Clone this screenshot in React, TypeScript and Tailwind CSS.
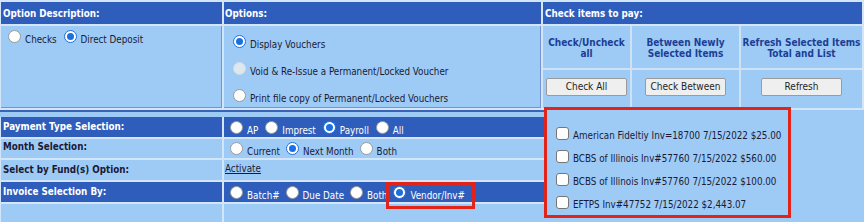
import React from "react";

// colours taken from the screenshot
const DARK = "bg-[#2f5dbb]";
const LIGHT = "bg-[#9ecbf5]";

function Radio({ checked = false, disabled = false }: { checked?: boolean; disabled?: boolean }) {
  if (disabled) {
    return <span className="w-[13px] h-[13px] mb-[3px] rounded-full bg-[#dfe7ee] border border-[#d2dbe3] shrink-0" />;
  }
  return (
    <span
      className={`w-[13px] h-[13px] mb-[3px] rounded-full bg-white border flex items-center justify-center shrink-0 ${
        checked ? "border-[#1d6fe0]" : "border-[#9a9a9a]"
      }`}
    >
      {checked && <span className="w-[7px] h-[7px] rounded-full bg-[#1d6fe0]" />}
    </span>
  );
}

function Option({ label, checked, disabled }: { label: string; checked?: boolean; disabled?: boolean }) {
  return (
    <label className="flex items-end gap-[4px] whitespace-nowrap">
      <Radio checked={checked} disabled={disabled} />
      <span className="leading-[12px]">{label}</span>
    </label>
  );
}

function Check({ label }: { label: string }) {
  return (
    <label className="flex items-end gap-[4px] whitespace-nowrap">
      <span className="w-[13px] h-[13px] mb-[2px] rounded-[3px] bg-white border border-[#767676] shrink-0" />
      <span className="leading-[12px]">{label}</span>
    </label>
  );
}

function Button({ children }: { children: React.ReactNode }) {
  return (
    <button className="w-[81px] h-[18px] bg-[#efefef] border border-[#9b9b9b] rounded-[2px] text-[#1f1f1f] text-[10px] leading-[16px]">
      {children}
    </button>
  );
}

const ITEMS = [
  "American Fideltiy Inv=18700 7/15/2022 $25.00",
  "BCBS of Illinois Inv#57760 7/15/2022 $560.00",
  "BCBS of Illinois Inv#57760 7/15/2022 $100.00",
  "EFTPS Inv#47752 7/15/2022 $2,443.07",
];

export default function App() {
  return (
    <div className="w-[864px] h-[222px] overflow-hidden bg-[#9ecbf5] text-[9.75px] text-[#1a1a38] font-['DejaVu_Sans_Condensed','Liberation_Sans',sans-serif]">
      {/* Top table */}
      <div className="h-[110px] grid grid-cols-[221px_317px_319px] grid-rows-[22px_82px] gap-[2px] pt-[2px] pl-[1px] pb-[2px] bg-[#d3e5f8]">
        <div className={`${DARK} text-white font-bold flex items-center pl-[2px] pt-[2px]`}>Option Description:</div>
        <div className={`${DARK} text-white font-bold flex items-center pl-[1px] pt-[2px]`}>Options:</div>
        <div className={`${DARK} text-white font-bold flex items-center pl-[2px] pt-[2px]`}>Check items to pay:</div>

        <div className={`${LIGHT} border-r border-b border-[#6f98d3] flex items-start gap-[7px] pl-[7px] pt-[4px]`}>
          <Option label="Checks" />
          <Option label="Direct Deposit" checked />
        </div>
        <div className={`${LIGHT} border-r border-b border-[#6f98d3] flex flex-col items-start gap-[11px] pl-[9px] pt-[9px]`}>
          <Option label="Display Vouchers" checked />
          <Option label="Void & Re-Issue a Permanent/Locked Voucher" disabled />
          <Option label="Print file copy of Permanent/Locked Vouchers" />
        </div>
        <div className="grid grid-cols-[87px_107px_1fr] grid-rows-[42px_1fr] gap-[2px] bg-[#cfe1f5]">
          <div className={`${LIGHT} flex items-center justify-center text-center font-bold text-[10px] text-[#1d3e96] leading-[11px] pt-[2px]`}>
            Check/Uncheck
            <br />
            all
          </div>
          <div className={`${LIGHT} flex items-center justify-center text-center font-bold text-[10px] text-[#1d3e96] leading-[11px] pt-[2px]`}>
            Between Newly
            <br />
            Selected Items
          </div>
          <div className={`${LIGHT} flex items-center justify-center text-center font-bold text-[10px] text-[#1d3e96] leading-[11px] pt-[2px]`}>
            Refresh Selected Items
            <br />
            Total and List
          </div>
          <div className={`${LIGHT} flex items-center justify-center pb-[4px]`}>
            <Button>Check All</Button>
          </div>
          <div className={`${LIGHT} flex items-center justify-center pb-[4px]`}>
            <Button>Check Between</Button>
          </div>
          <div className={`${LIGHT} flex items-center justify-center pb-[4px]`}>
            <Button>Refresh</Button>
          </div>
        </div>
      </div>

      {/* Lower table */}
      <div className="h-[112px] flex">
        <div className="w-[544px] flex flex-col">
          <div className="h-[7px] flex flex-col">
            <div className="h-[2px] bg-[#3a63b6]" />
            <div className="h-[5px] bg-[#9ecbf5]" />
          </div>
          <div className="flex-1 grid grid-cols-[221px_1fr] grid-rows-[20px_19px_20px_20px_1fr] gap-[2px] pl-[1px] bg-[#d3e5f8]">
            <div className={`${DARK} text-white font-bold flex items-center pl-[2px]`}>Payment Type Selection:</div>
            <div className={`${DARK} text-white flex items-end gap-[7px] pl-[6px]`}>
              <Option label="AP" />
              <Option label="Imprest" />
              <Option label="Payroll" checked />
              <Option label="All" />
            </div>

            <div className={`${LIGHT} font-bold flex items-start pl-[2px] pt-[1px]`}>Month Selection:</div>
            <div className={`${LIGHT} flex items-end gap-[6px] pl-[6px]`}>
              <Option label="Current" />
              <Option label="Next Month" checked />
              <Option label="Both" />
            </div>

            <div className={`${LIGHT} font-bold flex items-center pl-[2px]`}>Select by Fund(s) Option:</div>
            <div className={`${LIGHT} pl-[1px] pt-[2px]`}>
              <a className="underline text-[#1a1a38] leading-[12px]">Activate</a>
            </div>

            <div className={`${DARK} text-white font-bold flex items-center pl-[2px]`}>Invoice Selection By:</div>
            <div className={`${DARK} text-white flex items-end gap-[6px] pl-[6px]`}>
              <Option label="Batch#" />
              <Option label="Due Date" />
              <Option label="Both" />
              <span className="relative">
                <Option label="Vendor/Inv#" checked />
                <span className="absolute -left-[7px] -right-[10px] -top-[4px] -bottom-[7px] border-[3px] border-[#e2231a]" />
              </span>
            </div>

            <div className={LIGHT} />
            <div className={LIGHT} />
          </div>
        </div>

        <div className="flex-1">
          <div className="-mt-[3px] w-[247px] h-[111px] border-[3px] border-[#e2231a] bg-[#9ecbf5] flex flex-col gap-[8px] pl-[9px] pt-[17px]">
            {ITEMS.map((it) => (
              <Check key={it} label={it} />
            ))}
          </div>
        </div>
      </div>
    </div>
  );
}
